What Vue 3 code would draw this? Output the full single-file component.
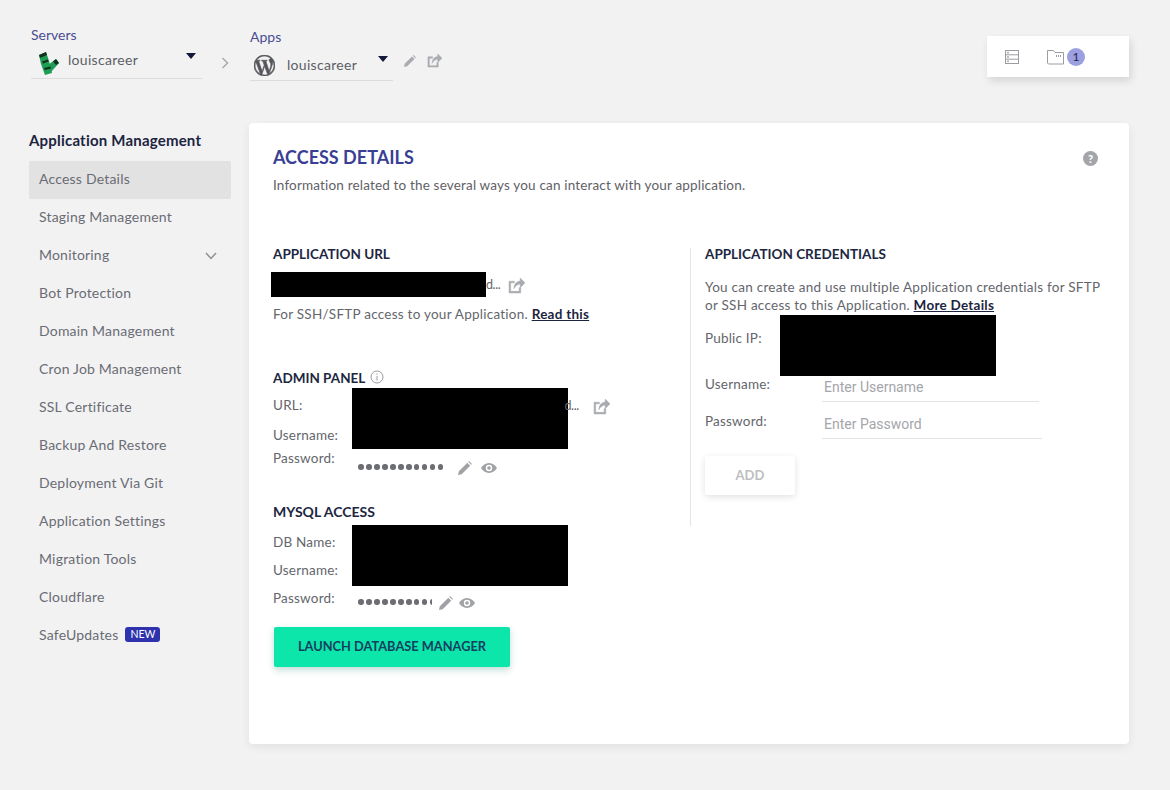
<template>
  <div class="page">
    <!-- Barra superior -->
    <header class="topbar">
      <div class="crumb crumb-server">
        <span class="crumb-label">Servers</span>
        <div class="crumb-select">
          <svg class="crumb-logo" width="22" height="24" viewBox="0 0 22 24">
            <polygon points="1,4 8,1 11,10 14,22 7,24 3,13" fill="#1f9d55"/>
            <polygon points="10,14 18,8 21,12 13,21" fill="#1f9d55"/>
            <polygon points="1,4 8,1 9,4 2,7" fill="#12301d"/>
            <polygon points="4,10.500 10,8.500 10.500,10.500 5,12.500" fill="#12301d"/>
            <polygon points="6,17 12.500,15.500 12.900,17.500 6.800,19" fill="#12301d"/>
            <polygon points="15,10.500 18,8 21,12 18,14" fill="#12301d"/>
          </svg>
          <span class="crumb-name">louiscareer</span>
          <span class="caret"></span>
        </div>
      </div>
      <svg class="crumb-sep" width="8" height="12" viewBox="0 0 8 12" fill="none" stroke="#a9abb0" stroke-width="1.5">
        <polyline points="1.5 1 6.5 6 1.5 11"/>
      </svg>
      <div class="crumb crumb-app">
        <span class="crumb-label">Apps</span>
        <div class="crumb-select">
          <svg class="crumb-logo" width="21" height="21" viewBox="0 0 24 24" fill="#55565a" stroke="#55565a" stroke-width=".7">
            <path d="M21.469 6.825c.84 1.537 1.318 3.3 1.318 5.175 0 3.979-2.156 7.456-5.363 9.325l3.295-9.527c.615-1.54.82-2.771.82-3.864 0-.405-.026-.78-.07-1.11m-7.981.105c.647-.03 1.232-.105 1.232-.105.582-.075.514-.93-.067-.899 0 0-1.755.135-2.88.135-1.064 0-2.85-.15-2.85-.15-.585-.03-.661.855-.075.885 0 0 .54.061 1.125.09l1.68 4.605-2.37 7.08L5.354 6.9c.649-.03 1.234-.1 1.234-.1.585-.075.516-.93-.065-.896 0 0-1.746.138-2.874.138-.2 0-.438-.008-.69-.015C4.911 3.15 8.235 1.215 12 1.215c2.809 0 5.365 1.072 7.286 2.833-.046-.003-.091-.009-.141-.009-1.06 0-1.812.923-1.812 1.914 0 .89.513 1.643 1.06 2.531.411.72.89 1.643.89 2.977 0 .915-.354 1.994-.821 3.479l-1.075 3.585-3.9-11.61.001.014zM12 22.784c-1.059 0-2.081-.153-3.048-.437l3.237-9.406 3.315 9.087c.024.053.05.101.078.149-1.12.393-2.325.609-3.582.609M1.211 12c0-1.564.336-3.05.935-4.39L7.29 21.709C3.694 19.96 1.212 16.271 1.211 12M12 0C5.385 0 0 5.385 0 12s5.385 12 12 12 12-5.385 12-12S18.615 0 12 0"/>
          </svg>
          <span class="crumb-name">louiscareer</span>
          <span class="caret"></span>
        </div>
      </div>
      <div class="crumb-actions">
        <svg width="12" height="12" viewBox="0 0 12 12" fill="#a9abb0"><path d="M0 12l.7-3.2L8 1.5 10.5 4 3.2 11.3zM8.8.7l.7-.7L12 2.500l-.7.7z"/></svg>
        <svg class="ext" width="15" height="15" viewBox="0 0 16 16" fill="#a9abb0" stroke="#a9abb0" stroke-width=".5">
          <path d="M1 4h5v1.500H2.500v8h8V10H12v5H1z"/><path d="M5.500 11c0-4 2.500-7 6-7.200V1L16 5.500 11.500 10V6.500C9 6.700 7 8.300 5.500 11z"/>
        </svg>
      </div>
      <div class="toolbox">
        <svg width="16" height="16" viewBox="0 0 16 16" fill="none" stroke="#9a9ca1">
          <rect x="1.500" y="1.500" width="13" height="13"/>
          <line x1="1.500" y1="5.800" x2="14.500" y2="5.800"/>
          <line x1="1.500" y1="10.200" x2="14.500" y2="10.200"/>
          <circle cx="4" cy="3.700" r=".6"/><circle cx="4" cy="8" r=".6"/><circle cx="4" cy="12.300" r=".6"/>
        </svg>
        <div class="files">
          <svg width="17" height="16" viewBox="0 0 17 16" fill="none" stroke="#9a9ca1">
            <path d="M.5 14V1.500h6l1.500 2h8.500V15H1.500z"/>
            <line x1="9" y1="7" x2="15" y2="7" stroke-dasharray="1 1" stroke-width="2"/>
          </svg>
          <span class="count">1</span>
        </div>
      </div>
    </header>

    <div class="layout">
      <!-- Menu lateral -->
      <aside class="sidebar">
        <h3 class="side-title">Application Management</h3>
        <nav class="side-menu">
          <a v-for="item in menu" :key="item.label" class="side-item" :class="{ active: item.active }">
            <span>{{ item.label }}</span>
            <span v-if="item.badge" class="badge">{{ item.badge }}</span>
            <svg v-if="item.expand" class="chev" width="12" height="8" viewBox="0 0 12 8" fill="none" stroke="#8d8f95" stroke-width="1.5">
              <polyline points="1 1 6 6.500 11 1"/>
            </svg>
          </a>
        </nav>
      </aside>

      <!-- Tarjeta principal -->
      <main class="card">
        <div class="card-head">
          <div>
            <h2>ACCESS DETAILS</h2>
            <p>Information related to the several ways you can interact with your application.</p>
          </div>
          <span class="help">?</span>
        </div>

        <div class="cols">
          <div class="col-left">
            <section class="sec-url">
              <h4>APPLICATION URL</h4>
              <div class="url-row">
                <span class="url-text">d...</span>
                <svg class="ext" width="17" height="17" viewBox="0 0 16 16" fill="#a9abb0" stroke="#a9abb0" stroke-width=".5">
                  <path d="M1 4h5v1.500H2.500v8h8V10H12v5H1z"/><path d="M5.500 11c0-4 2.500-7 6-7.200V1L16 5.500 11.500 10V6.500C9 6.700 7 8.300 5.500 11z"/>
                </svg>
                <div class="redact r-url"></div>
              </div>
              <p class="note">For SSH/SFTP access to your Application. <a>Read this</a></p>
            </section>

            <section class="sec-admin">
              <h4>ADMIN PANEL
                <svg width="14" height="14" viewBox="0 0 14 14" fill="none" stroke="#9a9ca1">
                  <circle cx="7" cy="7" r="6"/><line x1="7" y1="6" x2="7" y2="10.500"/><line x1="7" y1="3.500" x2="7" y2="4.800"/>
                </svg>
              </h4>
              <div class="admin-rows">
                <div class="redact r-admin"></div>
                <div class="row row-url">
                  <label>URL:</label>
                  <span class="url-text">d...</span>
                  <svg class="ext" width="17" height="17" viewBox="0 0 16 16" fill="#a9abb0" stroke="#a9abb0" stroke-width=".5">
                    <path d="M1 4h5v1.500H2.500v8h8V10H12v5H1z"/><path d="M5.500 11c0-4 2.500-7 6-7.200V1L16 5.500 11.500 10V6.500C9 6.700 7 8.300 5.500 11z"/>
                  </svg>
                </div>
                <div class="row row-user"><label>Username:</label></div>
                <div class="row row-pass">
                  <label>Password:</label>
                  <span class="dots"><i v-for="n in 11" :key="n"></i></span>
                  <svg class="pencil" width="14" height="14" viewBox="0 0 12 12" fill="#a0a2a6"><path d="M0 12l.7-3.200L8 1.500 10.500 4 3.200 11.300zM8.800.7l.7-.7L12 2.500l-.7.7z"/></svg>
                  <svg class="eye" width="16" height="12" viewBox="0 0 16 12" fill="#a0a2a6"><path fill-rule="evenodd" d="M8 1c3.500 0 6.300 2.200 8 5-1.700 2.800-4.500 5-8 5s-6.300-2.200-8-5c1.700-2.800 4.500-5 8-5zm0 1.800a3.200 3.200 0 100 6.400 3.200 3.200 0 000-6.400z"/><circle cx="8" cy="6" r="1.800"/></svg>
                </div>
              </div>
            </section>

            <section class="sec-mysql">
              <h4>MYSQL ACCESS</h4>
              <div class="admin-rows">
                <div class="redact r-mysql"></div>
                <div class="row row-db"><label>DB Name:</label></div>
                <div class="row row-dbuser"><label>Username:</label></div>
                <div class="row row-dbpass">
                  <label>Password:</label>
                  <span class="dots dots-short"><i v-for="n in 10" :key="n"></i></span>
                  <svg class="pencil" width="14" height="14" viewBox="0 0 12 12" fill="#a0a2a6"><path d="M0 12l.7-3.200L8 1.500 10.500 4 3.200 11.300zM8.800.7l.7-.7L12 2.500l-.7.7z"/></svg>
                  <svg class="eye" width="16" height="12" viewBox="0 0 16 12" fill="#a0a2a6"><path fill-rule="evenodd" d="M8 1c3.500 0 6.300 2.200 8 5-1.700 2.800-4.500 5-8 5s-6.300-2.200-8-5c1.700-2.800 4.500-5 8-5zm0 1.800a3.200 3.200 0 100 6.400 3.200 3.200 0 000-6.400z"/><circle cx="8" cy="6" r="1.800"/></svg>
                </div>
              </div>
              <button class="btn-launch">LAUNCH DATABASE MANAGER</button>
            </section>
          </div>

          <div class="col-right">
            <h4>APPLICATION CREDENTIALS</h4>
            <p class="note cred-note">You can create and use multiple Application credentials for SFTP or SSH access to this Application. <a>More Details</a></p>
            <div class="cred-rows">
              <div class="redact r-ip"></div>
              <div class="row row-ip"><label>Public IP:</label></div>
              <div class="row row-in">
                <label>Username:</label>
                <input placeholder="Enter Username" class="in-user"/>
              </div>
              <div class="row row-in">
                <label>Password:</label>
                <input placeholder="Enter Password" class="in-pass"/>
              </div>
            </div>
            <button class="btn-add">ADD</button>
          </div>
        </div>
      </main>
    </div>
  </div>
</template>

<script setup>
const menu = [
  { label: 'Access Details', active: true },
  { label: 'Staging Management' },
  { label: 'Monitoring', expand: true },
  { label: 'Bot Protection' },
  { label: 'Domain Management' },
  { label: 'Cron Job Management' },
  { label: 'SSL Certificate' },
  { label: 'Backup And Restore' },
  { label: 'Deployment Via Git' },
  { label: 'Application Settings' },
  { label: 'Migration Tools' },
  { label: 'Cloudflare' },
  { label: 'SafeUpdates', badge: 'NEW' },
]
</script>

<style scoped>
.page {
  width: 1170px; height: 790px; overflow: hidden; box-sizing: border-box;
  background: #f2f2f3; padding: 0 41px 0 29px;
  font-family: Lato, "Open Sans", sans-serif; color: #64666c; font-size: 14px;
}

/* Topbar */
.topbar { height: 123px; display: flex; align-items: flex-start; position: relative; }
.crumb { display: flex; flex-direction: column; }
.crumb-label { font-size: 14px; line-height: 16px; color: #4a4d92; }
.crumb-server { width: 171px; margin: 27px 0 0 2px; }
.crumb-app { width: 143px; margin: 29px 0 0 0; }
.crumb-select {
  display: flex; align-items: center; height: 35px; box-sizing: border-box; margin-top: 1px;
  padding-bottom: 3px; border-bottom: 1px solid #dcdcde; position: relative;
}
.crumb-app .crumb-select { padding: 3px 0 0; }
.crumb-logo { margin-left: 7px; flex-shrink: 0; }
.crumb-server .crumb-logo { margin-top: 7px; }
.crumb-app .crumb-logo { margin-left: 4px; margin-top: 2px; }
.crumb-name { margin-left: 8px; font-size: 14px; letter-spacing: .3px; color: #5c5e65; }
.crumb-app .crumb-name { margin-left: 12px; }
.caret {
  position: absolute; right: 6px; top: 9px;
  border-left: 5px solid transparent; border-right: 5px solid transparent;
  border-top: 6px solid #14193c;
}
.crumb-app .caret { top: 10px; right: 5px; }
.crumb-sep { margin: 57px 21px 0 19px; }
.crumb-actions { display: flex; align-items: center; gap: 11px; margin: 53px 0 0 11px; }
.toolbox {
  margin: 36px 0 0 auto; width: 142px; height: 41px; box-sizing: border-box;
  background: #fff; display: flex; align-items: center; padding: 0 17px;
  box-shadow: 2px 4px 8px rgba(0,0,0,.12);
}
.files { display: flex; align-items: center; gap: 3px; margin-left: 27px; }
.count {
  width: 18px; height: 18px; border-radius: 50%; background: #9c9fe0;
  font-size: 12px; color: #23264d; text-align: center; line-height: 18px;
}

/* Layout */
.layout { display: flex; align-items: flex-start; gap: 18px; }

/* Sidebar */
.sidebar { width: 202px; flex-shrink: 0; }
.side-title { margin: 8px 0 0; font-size: 15px; line-height: 18px; font-weight: 700; color: #1d2440; letter-spacing: .2px; }
.side-menu { display: flex; flex-direction: column; margin-top: 12px; }
.side-item {
  height: 38px; box-sizing: border-box; display: flex; align-items: center; padding: 0 10px 4px; gap: 7px;
  font-size: 14px; letter-spacing: .2px; color: #6a6c73; border-radius: 2px;
}
.side-item.active { background: #e2e2e3; }
.badge {
  background: #2e33ad; color: #fff; font-size: 10.500px; line-height: 15px;
  padding: 0 5px; border-radius: 3px; letter-spacing: 0;
}
.chev { margin-left: auto; margin-right: 4px; margin-top: 3px; }

/* Card */
.card {
  width: 880px; height: 621px; box-sizing: border-box; background: #fff;
  border-radius: 4px; padding: 24px;
  box-shadow: 0 3px 10px rgba(0,0,0,.07);
}
.card-head { display: flex; justify-content: space-between; align-items: flex-start; }
.card-head h2 { margin: 0; font-size: 18px; line-height: 20px; font-weight: 700; color: #3a3f95; letter-spacing: 0; }
.card-head p { margin: 9px 0 0; font-size: 13.500px; line-height: 18px; letter-spacing: .17px; color: #5f6167; }
.help {
  width: 15px; height: 15px; border-radius: 50%; background: #a3a5a9; color: #fff;
  font-size: 11px; font-weight: 900; text-align: center; line-height: 15px; margin: 4px 7px 0 0;
}

.cols { display: flex; margin-top: 52px; }
.col-left { width: 417px; flex-shrink: 0; }
.col-right { width: 400px; border-left: 1px solid #e4e4e6; padding-left: 14px; height: 278px; margin-top: 2px; }
.col-right h4 { margin-top: -2px; }
h4 { margin: 0; font-size: 13.500px; line-height: 16px; font-weight: 700; color: #20263f; }
.sec-mysql h4 { font-size: 14px; }
h4 svg { margin-left: 2px; vertical-align: -1px; }

.redact { position: absolute; background: #000; }
.url-row { position: relative; display: flex; align-items: center; height: 24px; margin-top: 10px; }
.url-text { font-size: 12.500px; letter-spacing: -.4px; color: #64666c; }
.url-row .url-text { margin-left: 213px; }
.url-row .ext { margin-left: 8px; margin-top: 3px; }
.r-url { left: -2px; top: 0; width: 215px; height: 25px; }
.note { margin: 9px 0 0; font-size: 13.500px; line-height: 18px; letter-spacing: .25px; color: #64666c; }
.note a { color: #1d2440; font-weight: 700; text-decoration: underline; }

.sec-admin { margin-top: 47px; }
.admin-rows { position: relative; }
.row { display: flex; align-items: center; font-size: 13.500px; }
.row label { letter-spacing: .2px; color: #64666c; }
.r-admin { left: 79px; top: -6px; width: 216px; height: 61px; }
.row-url { height: 22px; margin-top: 8px; position: relative; }
.row-url .url-text { margin-left: 262px; }
.row-url .ext { margin-left: 14px; margin-top: 3px; }
.row-user { height: 22px; margin-top: 8px; }
.row-pass { height: 22px; margin-top: 1px; position: relative; }
.dots { display: flex; gap: 2.400px; overflow: hidden; position: absolute; left: 85px; top: 17px; }
.dots i { width: 5.600px; height: 5.600px; border-radius: 50%; background: #6c6e73; flex-shrink: 0; }
.dots-short { width: 74px; top: 12px; }
.row-pass .pencil { position: absolute; left: 185px; top: 14px; }
.row-pass .eye { position: absolute; left: 208px; top: 15px; }
.row-dbpass .pencil { position: absolute; left: 166px; top: 9px; }
.row-dbpass .eye { position: absolute; left: 186px; top: 10px; }

.sec-mysql { margin-top: 35px; }
.r-mysql { left: 79px; top: -6px; width: 216px; height: 61px; }
.row-db { height: 22px; margin-top: 11px; }
.row-dbuser { height: 22px; margin-top: 6px; }
.row-dbpass { height: 22px; margin-top: 6px; position: relative; }
.btn-launch {
  display: block; width: 236px; height: 40px; margin: 18px 0 0 1px; border: 0; border-radius: 2px; padding: 0 0 2px;
  background: #0ce6ab; color: #14405f; font-family: inherit; font-size: 12.800px; font-weight: 700;
  box-shadow: 0 3px 7px rgba(0,120,90,.25);
}

.cred-note { margin-top: 16px; line-height: 18px; }
.cred-rows { position: relative; margin-top: 0; }
.r-ip { left: 75px; top: -12px; width: 216px; height: 61px; }
.row-ip { height: 22px; margin-top: 13px; }
.row-in { height: 37px; position: relative; }
.row-in label { position: absolute; left: 0; top: 6px; }
.row-ip + .row-in { margin-top: 21px; }
.row-in input {
  position: absolute; left: 117px; top: 0; box-sizing: border-box; height: 32px; padding: 3px 2px 0;
  border: 0; border-bottom: 1px solid #e4e4e6; outline: none; background: transparent;
  font-family: Roboto, sans-serif; font-size: 14px;
}
.row-in input::placeholder { color: #a4a6aa; opacity: 1; }
.in-user { width: 217px; }
.in-pass { width: 220px; }
.btn-add {
  display: block; width: 90px; height: 39px; margin-top: 12px; border: 0; background: #fff; padding: 0 0 2px;
  border-radius: 2px; color: #bdbec1; font-family: inherit; font-size: 13px; font-weight: 700;
  box-shadow: 0 2px 7px rgba(0,0,0,.12);
}
</style>

<style>
html, body { background: #f2f2f3; }
</style>
